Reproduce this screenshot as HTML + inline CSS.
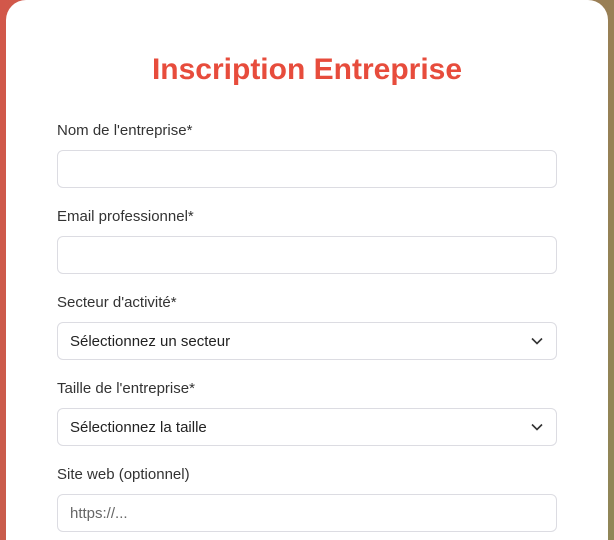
<!DOCTYPE html>
<html><head><meta charset="utf-8"><style>
html,body{margin:0;padding:0;width:614px;height:540px;overflow:hidden}
body{position:relative;background:linear-gradient(100deg,#d2574a 0%,#b8664f 40%,#8f8757 100%);font-family:"Liberation Sans",sans-serif}
.card{position:absolute;left:6px;top:0;width:602px;height:540px;background:#fff;border-radius:20px 20px 0 0}
h1{position:absolute;left:0;width:614px;top:52px;margin:0;text-align:center;font-size:30px;font-weight:bold;color:#e74c3c;line-height:36px}
.l{position:absolute;left:57px;font-size:15px;color:#333;line-height:18px}
.i{position:absolute;left:57px;width:498px;height:36px;border:1px solid #dcdce2;border-radius:6px;background:#fff;font-size:15px;color:#222;line-height:38px;box-sizing:content-box}
.i span{position:absolute;left:12px}
.i svg{position:absolute;right:13px;top:14px}
.ph{color:#666}
</style></head><body>
<div class="card"></div>
<h1>Inscription Entreprise</h1>
<div class="l" style="top:122px">Nom de l'entreprise*</div>
<div class="i" style="top:150px"></div>
<div class="l" style="top:208px">Email professionnel*</div>
<div class="i" style="top:236px"></div>
<div class="l" style="top:294px">Secteur d'activité*</div>
<div class="i" style="top:322px"><span>Sélectionnez un secteur</span><svg width="12" height="8" viewBox="0 0 12 8"><path d="M1 1.5L6 6.5L11 1.5" stroke="#333" stroke-width="1.6" fill="none"/></svg></div>
<div class="l" style="top:380px">Taille de l'entreprise*</div>
<div class="i" style="top:408px"><span>Sélectionnez la taille</span><svg width="12" height="8" viewBox="0 0 12 8"><path d="M1 1.5L6 6.5L11 1.5" stroke="#333" stroke-width="1.6" fill="none"/></svg></div>
<div class="l" style="top:466px">Site web (optionnel)</div>
<div class="i" style="top:494px"><span class="ph">https://...</span></div>
</body></html>
